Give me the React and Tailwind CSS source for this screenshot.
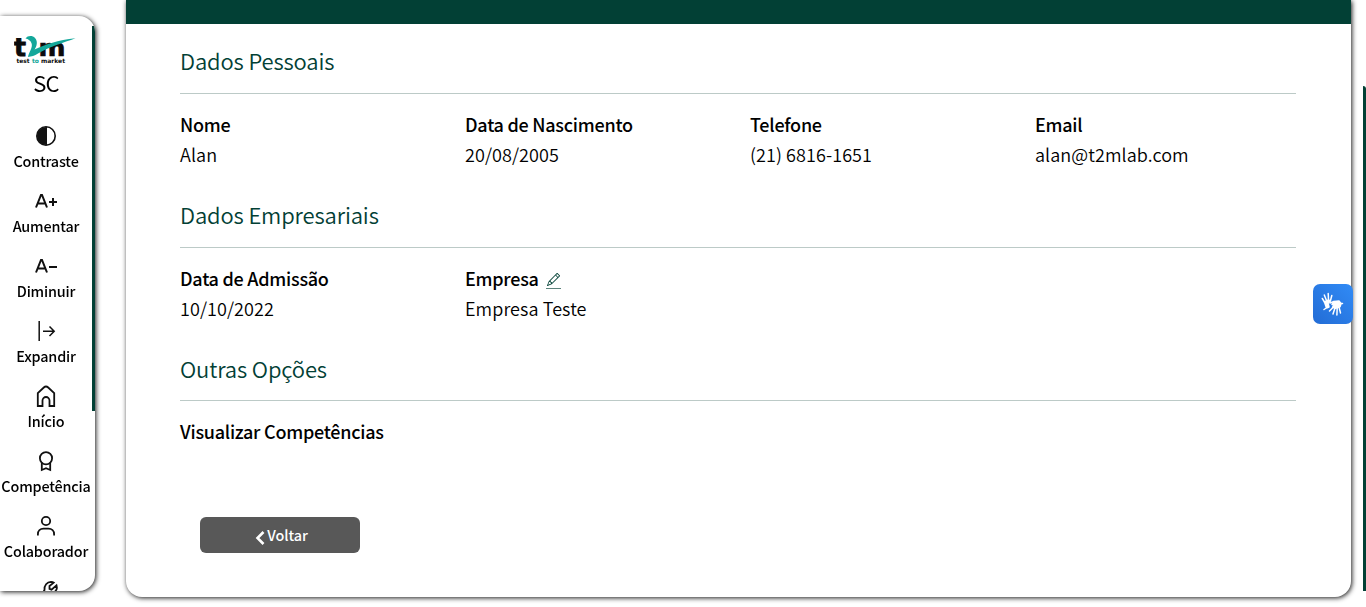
import React from "react";
import { BsPencil } from "react-icons/bs";

function Logo() {
  return (
    <svg width="64" height="32" viewBox="0 0 64 32" className="block">
      <g fontFamily="DejaVu Sans" fontWeight="700" fill="#0b0b0b">
        <text x="0" y="21" fontSize="24" textLength="12" lengthAdjust="spacingAndGlyphs" stroke="#0b0b0b" strokeWidth="0.8">t</text>
        <text x="24.500" y="21" fontSize="23" textLength="27" lengthAdjust="spacingAndGlyphs" stroke="#0b0b0b" strokeWidth="0.6">m</text>
        <text x="2.500" y="28" fontSize="6" textLength="13" lengthAdjust="spacingAndGlyphs">test</text>
        <text x="18" y="28" fontSize="6" textLength="7" lengthAdjust="spacingAndGlyphs" fill="#13a79a">to</text>
        <text x="27" y="28" fontSize="6" textLength="24" lengthAdjust="spacingAndGlyphs">market</text>
      </g>
      <path d="M11.500 3.500C13.500.500 18.500.200 21 3c3 3.300 2 7.800-.5 11.600C31 9.500 44 5 61.500 3.200 50 7.500 33 12.500 24 18.600c-3.500 2.400-6.500 2.900-10 3.400.5-4.500 5-9.500 3.600-13.600-.8-2.600-3.300-4.400-6.100-4.900Z" fill="#13a79a" />
    </svg>
  );
}

function Contrast() {
  return (
    <svg width="20" height="20" viewBox="0 0 20 20">
      <circle cx="10" cy="10" r="9.200" fill="none" stroke="#111" strokeWidth="1.600" />
      <path d="M11 1v18h-1A9 9 0 0 1 10 1Z" fill="#111" />
    </svg>
  );
}

function LineIcon({ children, width = 1.8 }) {
  return (
    <svg width="24" height="24" viewBox="0 0 24 24" fill="none" stroke="#111" strokeWidth={width}>
      {children}
    </svg>
  );
}

const fontSizeA = "M2 18.500 7 6h1l5 12.500M4 14.500h7.500M15 13h8";

const items = [
  ["Contraste", <Contrast />],
  ["Aumentar", <LineIcon width={2}><path d={fontSizeA} /><path d="M19 9v8" /></LineIcon>],
  ["Diminuir", <LineIcon width={2}><path d={fontSizeA} /></LineIcon>],
  ["Expandir", <LineIcon width={1.5}><path d="M5.200 2v20M9 12.300h11M15.500 7.500l4.700 4.800-4.700 4.800" /></LineIcon>],
  ["Início", <LineIcon><path d="M3.800 22V9.200L9.800 3.500a3.200 3.200 0 0 1 4.400 0l6 5.700V22h-4.700v-5.500a3.500 3.500 0 0 0-7 0V22Z" /></LineIcon>],
  ["Competência", <LineIcon><circle cx="12" cy="9.200" r="6.100" /><path d="M7.800 13.500V21l4.200-1.800 4.200 1.800v-7.500" /></LineIcon>],
  ["Colaborador", <LineIcon><circle cx="12" cy="7" r="4.200" /><path d="M3.900 21.500v-1.300c0-3.300 2.300-5.500 5.600-5.500h5c3.300 0 5.600 2.200 5.600 5.500v1.300" /></LineIcon>],
];

function Sidebar() {
  return (
    <aside className="mt-4 flex h-[575px] w-[95px] shrink-0 justify-between overflow-hidden rounded-r-[16px] bg-white">
      <div className="flex w-[92px] flex-col items-center pt-[19px]">
        <div className="mr-px h-8 w-16"><Logo /></div>
        <div className="h-[28px] text-[22px] leading-[31px] tracking-[-0.7px]">SC</div>
        <nav className="mt-[25px] flex flex-col items-center">
          {items.map(([label, icon]) => (
            <div key={label} className="flex h-[65px] w-[92px] shrink-0 flex-col items-center">
              <div className="flex h-8 items-center justify-center">{icon}</div>
              <div className="text-[14.400px] leading-[17px] font-medium tracking-[-0.170px] whitespace-nowrap">{label}</div>
            </div>
          ))}
          <div className="ml-[7px] flex h-6 justify-center pt-1">
            <LineIcon width={1.8}><path d="M4.500 17v-2.500l2-3.500C6 6.500 9 3 13 2.800c1.200 0 2.200.3 2.800.8L11.500 7v2.800l2 .8 5-4.300c1 3.200-.5 6.200-3.500 8" /></LineIcon>
          </div>
        </nav>
      </div>
      <div className="mt-[10px] h-[385px] w-[3px] shrink-0 bg-[#024035]" />
    </aside>
  );
}

function Field({ label, value, edit }) {
  return (
    <div className="w-[285px] shrink-0">
      <div className="flex h-[30px] items-center text-[18px] leading-[30px] font-medium tracking-[-0.250px]">
        {label}
        {edit && (
          <span className="mt-[5px] ml-[7px] flex h-[17px] w-[15px] items-start justify-center border-b border-[#5c827b] pt-[1px] text-[#024035]">
            <BsPencil size={13} />
          </span>
        )}
      </div>
      {value && <div className="h-[30px] text-[18px] leading-[30px] font-[350] tracking-[0.080px]">{value}</div>}
    </div>
  );
}

function Section({ title, children }) {
  return (
    <section className="h-[153.600px]">
      <h2 className="h-[55px] border-b border-[#bccac7] pt-[3.500px] text-[22px] leading-[36px] font-[350] tracking-[-0.130px] text-[#024035]">{title}</h2>
      <div className="flex pt-[15.300px]">{children}</div>
    </section>
  );
}

function Hands() {
  return (
    <svg width="26" height="26" viewBox="0 0 26 26" fill="none" stroke="white" strokeWidth="1.500" strokeLinecap="round" strokeLinejoin="round">
      <path d="M4.500 11 2.300 7.500M6.500 9.500 4.300 4M8.500 9 8.200 2.500M10.500 9.500 11.800 4.500M5.500 17.500l-1.500 1" />
      <path d="M4.500 11 8.500 8.800l1.800 1.500-2.300 2 1 3.700-2.500 1Z" fill="white" />
      <path d="m12 13.500 2-3 5-.6 2 2.800-1 3-4.500 1.500-3-.9 1.500-2.500Z" fill="white" />
      <path d="m13 16.500-3.500 3.500M15 17l-2 6M17.200 17l-.3 7M19 16l1.500 6M10 12l4-1.500M20 12.500h2.500" />
    </svg>
  );
}

export default function App() {
  return (
    <div className="relative flex h-[607px] w-[1366px] overflow-hidden bg-white font-['Noto_Sans_CJK_JP',sans-serif] text-black">
      <div className="h-[591px] shrink-0 rounded-r-[16px] drop-shadow-[1px_1px_2.500px_rgba(0,0,0,0.9)]">
        <Sidebar />
      </div>
      <main className="ml-[31px] h-[597px] w-[1225px] shrink-0 rounded-b-[16px] bg-white shadow-[1px_1px_5px_rgba(0,0,0,0.9)]">
        <div className="h-6 bg-[#024035]" />
        <div className="mr-[55px] ml-[54px] pt-[14.950px]">
          <Section title="Dados Pessoais">
            <Field label="Nome" value="Alan" />
            <Field label="Data de Nascimento" value="20/08/2005" />
            <Field label="Telefone" value="(21) 6816-1651" />
            <Field label="Email" value="alan@t2mlab.com" />
          </Section>
          <Section title="Dados Empresariais">
            <Field label="Data de Admissão" value="10/10/2022" />
            <Field label="Empresa" value="Empresa Teste" edit />
          </Section>
          <Section title="Outras Opções">
            <Field label="Visualizar Competências" />
          </Section>
          <button className="mt-[17.250px] ml-5 flex h-9 w-40 items-center justify-center gap-[2px] rounded-md bg-[#585858] pl-[3px] text-[14.400px] font-medium tracking-[-0.1px] text-white">
            <svg width="10" height="14" viewBox="0 0 10 14" className="mt-1.5" fill="none" stroke="white" strokeWidth="2.600"><path d="M8.500 1 2.500 7l6 6" /></svg>
            Voltar
          </button>
        </div>
      </main>
      <div className="absolute top-[86px] right-0 h-[505px] w-[3px] rounded-tr-sm bg-[#024035]" />
      <div className="absolute top-[284px] left-[1313px] flex h-10 w-10 items-center justify-center rounded-[7px] bg-linear-to-tr from-[#236cd5] to-[#318bf6] text-white">
        <Hands />
      </div>
    </div>
  );
}
